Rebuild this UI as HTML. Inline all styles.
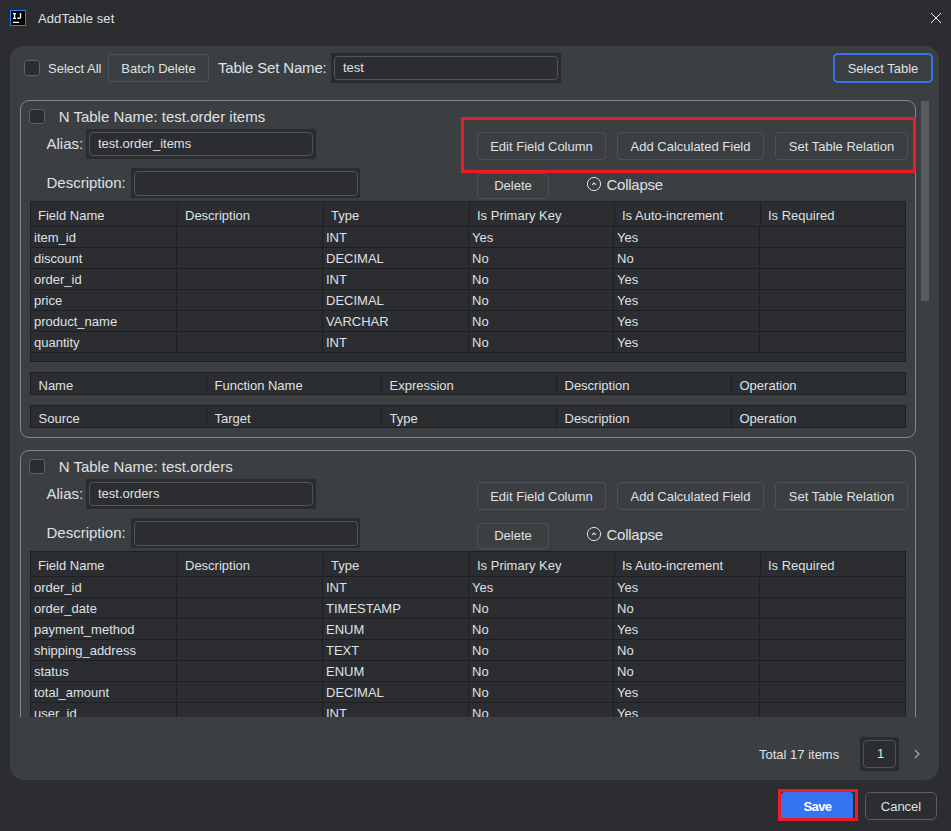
<!DOCTYPE html>
<html><head><meta charset="utf-8"><style>
html,body{margin:0;padding:0;}
body{width:951px;height:831px;overflow:hidden;background:#2B2D30;position:relative;font-family:"Liberation Sans",sans-serif;color:#DFE1E5;}
.a{position:absolute;}
.t{position:absolute;white-space:nowrap;line-height:normal;}
</style></head><body>
<svg class="a" style="left:10px;top:10px" width="16" height="16" viewBox="0 0 16 16">
<rect x="0.5" y="0.5" width="15" height="15" fill="#000" stroke="#2186F2" stroke-width="1"/>
<path d="M3 3.1 H6 V4.3 H5.2 V7.7 H6 V8.9 H3 V7.7 H3.9 V4.3 H3 Z" fill="#fff"/>
<path d="M9.8 3 H11.2 V7.3 Q11.2 9.1 9.4 9.1 H8.8 Q7.2 9.1 7.2 7.5 V7.3 H8.5 V7.4 Q8.5 7.8 8.9 7.8 H9.3 Q9.8 7.8 9.8 7.3 Z" fill="#fff"/>
<rect x="3" y="11.8" width="6" height="1.2" fill="#fff"/>
</svg>
<div class="t" style="left:38px;top:11px;font-size:13px;color:#DFE1E5;font-weight:normal;letter-spacing:0.1px">AddTable set</div>
<svg class="a" style="left:931px;top:13px" width="10" height="10" viewBox="0 0 10 10" shape-rendering="crispEdges" fill="#F0F0F0"><rect x="0" y="0" width="1" height="1"/><rect x="9" y="0" width="1" height="1"/><rect x="1" y="1" width="1" height="1"/><rect x="8" y="1" width="1" height="1"/><rect x="2" y="2" width="1" height="1"/><rect x="7" y="2" width="1" height="1"/><rect x="3" y="3" width="1" height="1"/><rect x="6" y="3" width="1" height="1"/><rect x="4" y="4" width="1" height="1"/><rect x="5" y="4" width="1" height="1"/><rect x="5" y="5" width="1" height="1"/><rect x="4" y="5" width="1" height="1"/><rect x="6" y="6" width="1" height="1"/><rect x="3" y="6" width="1" height="1"/><rect x="7" y="7" width="1" height="1"/><rect x="2" y="7" width="1" height="1"/><rect x="8" y="8" width="1" height="1"/><rect x="1" y="8" width="1" height="1"/><rect x="9" y="9" width="1" height="1"/><rect x="0" y="9" width="1" height="1"/></svg>
<div class="a" style="left:10px;top:46px;width:929px;height:734px;background:#3C3F41;border-radius:14px;"></div>
<div class="a" style="left:24px;top:60px;width:16px;height:16px;box-sizing:border-box;border:1px solid #5E6166;border-radius:3px;background:#2B2D30;"></div>
<div class="t" style="left:48px;top:61px;font-size:13px;color:#DFE1E5;font-weight:normal;">Select All</div>
<div class="a" style="left:108px;top:54px;width:101px;height:28px;box-sizing:border-box;border:1px solid #4E5157;border-radius:4px;background:transparent;"></div>
<div class="t" style="left:108px;width:101px;text-align:center;top:61px;font-size:13px;color:#DFE1E5;font-weight:normal">Batch Delete</div>
<div class="t" style="left:218px;top:59px;font-size:15px;color:#DFE1E5;font-weight:normal;letter-spacing:-0.15px">Table Set Name:</div>
<div class="a" style="left:331px;top:53px;width:230px;height:30px;background:#2A2C2F;"></div>
<div class="a" style="left:334px;top:56px;width:224px;height:24px;box-sizing:border-box;border:1px solid #50535A;border-radius:4px;background:#2B2D30;"></div>
<div class="t" style="left:343px;top:60px;font-size:13px;color:#DFE1E5;font-weight:normal;">test</div>
<div class="a" style="left:833px;top:53px;width:100px;height:30px;box-sizing:border-box;border:2px solid #3574F0;border-radius:5px;background:transparent;"></div>
<div class="t" style="left:833px;width:100px;text-align:center;top:61px;font-size:13px;color:#DFE1E5;font-weight:normal">Select Table</div>
<div class="a" style="left:0;top:95px;width:951px;height:622px;overflow:hidden">
<div class="a" style="left:20px;top:5px;width:896px;height:338px;box-sizing:border-box;border:1px solid #85878A;border-radius:9px"></div>
<div class="a" style="left:29px;top:14px;width:16px;height:15px;box-sizing:border-box;border:1px solid #5E6166;border-radius:3px;background:#2B2D30;"></div>
<div class="t" style="left:58.7px;top:13px;font-size:15px;color:#DFE1E5;font-weight:normal;">N Table Name: test.order items</div>
<div class="t" style="left:46.5px;top:40px;font-size:15px;color:#DFE1E5;font-weight:normal;">Alias:</div>
<div class="a" style="left:86px;top:34px;width:230px;height:30px;background:#2A2C2F;"></div>
<div class="a" style="left:89px;top:37px;width:224px;height:24px;box-sizing:border-box;border:1px solid #50535A;border-radius:4px;background:#2B2D30;"></div>
<div class="t" style="left:98px;top:41px;font-size:13px;color:#DFE1E5;font-weight:normal;">test.order_items</div>
<div class="t" style="left:46.5px;top:79px;font-size:15px;color:#DFE1E5;font-weight:normal;">Description:</div>
<div class="a" style="left:131px;top:73px;width:229px;height:30px;background:#2A2C2F;"></div>
<div class="a" style="left:134px;top:76px;width:224px;height:25px;box-sizing:border-box;border:1px solid #50535A;border-radius:4px;background:#2B2D30;"></div>
<div class="a" style="left:477px;top:37px;width:129px;height:28px;box-sizing:border-box;border:1px solid #4E5157;border-radius:4px;background:transparent;"></div>
<div class="t" style="left:477px;width:129px;text-align:center;top:44px;font-size:13px;color:#DFE1E5;font-weight:normal">Edit Field Column</div>
<div class="a" style="left:617px;top:37px;width:147px;height:28px;box-sizing:border-box;border:1px solid #4E5157;border-radius:4px;background:transparent;"></div>
<div class="t" style="left:617px;width:147px;text-align:center;top:44px;font-size:13px;color:#DFE1E5;font-weight:normal">Add Calculated Field</div>
<div class="a" style="left:775px;top:37px;width:133px;height:28px;box-sizing:border-box;border:1px solid #4E5157;border-radius:4px;background:transparent;"></div>
<div class="t" style="left:775px;width:133px;text-align:center;top:44px;font-size:13px;color:#DFE1E5;font-weight:normal">Set Table Relation</div>
<div class="a" style="left:477px;top:78px;width:72px;height:26px;box-sizing:border-box;border:1px solid #4E5157;border-radius:4px;background:transparent;"></div>
<div class="t" style="left:477px;width:72px;text-align:center;top:83px;font-size:13px;color:#DFE1E5;font-weight:normal">Delete</div>
<svg class="a" style="left:586px;top:81px" width="16" height="16" viewBox="0 0 16 16"><circle cx="8" cy="8" r="6.6" fill="none" stroke="#DFE1E5" stroke-width="1"/><path d="M6.1 8.9 L8 7.1 L9.9 8.9" fill="none" stroke="#DFE1E5" stroke-width="1.1"/></svg>
<div class="t" style="left:606.5px;top:81px;font-size:15px;color:#DFE1E5;font-weight:normal;letter-spacing:-0.25px">Collapse</div>
<div class="a" style="left:30px;top:106px;width:876px;height:160px;background:#2B2D30;"></div>
<div class="a" style="left:30px;top:106px;width:876px;height:1px;background:#1E1F22"></div>
<div class="a" style="left:30px;top:131px;width:876px;height:1px;background:#1E1F22"></div>
<div class="t" style="left:38px;top:113px;font-size:13px;color:#DFE1E5;font-weight:normal;">Field Name</div>
<div class="t" style="left:185px;top:113px;font-size:13px;color:#DFE1E5;font-weight:normal;">Description</div>
<div class="a" style="left:177px;top:108px;width:1px;height:22px;background:#1E1F22"></div>
<div class="t" style="left:331px;top:113px;font-size:13px;color:#DFE1E5;font-weight:normal;">Type</div>
<div class="a" style="left:323px;top:108px;width:1px;height:22px;background:#1E1F22"></div>
<div class="t" style="left:477px;top:113px;font-size:13px;color:#DFE1E5;font-weight:normal;">Is Primary Key</div>
<div class="a" style="left:469px;top:108px;width:1px;height:22px;background:#1E1F22"></div>
<div class="t" style="left:622px;top:113px;font-size:13px;color:#DFE1E5;font-weight:normal;">Is Auto-increment</div>
<div class="a" style="left:614px;top:108px;width:1px;height:22px;background:#1E1F22"></div>
<div class="t" style="left:768px;top:113px;font-size:13px;color:#DFE1E5;font-weight:normal;">Is Required</div>
<div class="a" style="left:760px;top:108px;width:1px;height:22px;background:#1E1F22"></div>
<div class="a" style="left:30px;top:152px;width:876px;height:1px;background:#1E1F22"></div>
<div class="a" style="left:176px;top:132px;width:1px;height:21px;background:#1E1F22"></div>
<div class="a" style="left:322px;top:132px;width:1px;height:21px;background:#1E1F22"></div>
<div class="a" style="left:468px;top:132px;width:1px;height:21px;background:#1E1F22"></div>
<div class="a" style="left:613px;top:132px;width:1px;height:21px;background:#1E1F22"></div>
<div class="a" style="left:759px;top:132px;width:1px;height:21px;background:#1E1F22"></div>
<div class="t" style="left:34px;top:135px;font-size:13px;color:#DFE1E5;font-weight:normal;">item_id</div>
<div class="t" style="left:326px;top:135px;font-size:13px;color:#DFE1E5;font-weight:normal;">INT</div>
<div class="t" style="left:472px;top:135px;font-size:13px;color:#DFE1E5;font-weight:normal;">Yes</div>
<div class="t" style="left:617px;top:135px;font-size:13px;color:#DFE1E5;font-weight:normal;">Yes</div>
<div class="a" style="left:30px;top:173px;width:876px;height:1px;background:#1E1F22"></div>
<div class="a" style="left:176px;top:153px;width:1px;height:21px;background:#1E1F22"></div>
<div class="a" style="left:322px;top:153px;width:1px;height:21px;background:#1E1F22"></div>
<div class="a" style="left:468px;top:153px;width:1px;height:21px;background:#1E1F22"></div>
<div class="a" style="left:613px;top:153px;width:1px;height:21px;background:#1E1F22"></div>
<div class="a" style="left:759px;top:153px;width:1px;height:21px;background:#1E1F22"></div>
<div class="t" style="left:34px;top:156px;font-size:13px;color:#DFE1E5;font-weight:normal;">discount</div>
<div class="t" style="left:326px;top:156px;font-size:13px;color:#DFE1E5;font-weight:normal;">DECIMAL</div>
<div class="t" style="left:472px;top:156px;font-size:13px;color:#DFE1E5;font-weight:normal;">No</div>
<div class="t" style="left:617px;top:156px;font-size:13px;color:#DFE1E5;font-weight:normal;">No</div>
<div class="a" style="left:30px;top:194px;width:876px;height:1px;background:#1E1F22"></div>
<div class="a" style="left:176px;top:174px;width:1px;height:21px;background:#1E1F22"></div>
<div class="a" style="left:322px;top:174px;width:1px;height:21px;background:#1E1F22"></div>
<div class="a" style="left:468px;top:174px;width:1px;height:21px;background:#1E1F22"></div>
<div class="a" style="left:613px;top:174px;width:1px;height:21px;background:#1E1F22"></div>
<div class="a" style="left:759px;top:174px;width:1px;height:21px;background:#1E1F22"></div>
<div class="t" style="left:34px;top:177px;font-size:13px;color:#DFE1E5;font-weight:normal;">order_id</div>
<div class="t" style="left:326px;top:177px;font-size:13px;color:#DFE1E5;font-weight:normal;">INT</div>
<div class="t" style="left:472px;top:177px;font-size:13px;color:#DFE1E5;font-weight:normal;">No</div>
<div class="t" style="left:617px;top:177px;font-size:13px;color:#DFE1E5;font-weight:normal;">Yes</div>
<div class="a" style="left:30px;top:215px;width:876px;height:1px;background:#1E1F22"></div>
<div class="a" style="left:176px;top:195px;width:1px;height:21px;background:#1E1F22"></div>
<div class="a" style="left:322px;top:195px;width:1px;height:21px;background:#1E1F22"></div>
<div class="a" style="left:468px;top:195px;width:1px;height:21px;background:#1E1F22"></div>
<div class="a" style="left:613px;top:195px;width:1px;height:21px;background:#1E1F22"></div>
<div class="a" style="left:759px;top:195px;width:1px;height:21px;background:#1E1F22"></div>
<div class="t" style="left:34px;top:198px;font-size:13px;color:#DFE1E5;font-weight:normal;">price</div>
<div class="t" style="left:326px;top:198px;font-size:13px;color:#DFE1E5;font-weight:normal;">DECIMAL</div>
<div class="t" style="left:472px;top:198px;font-size:13px;color:#DFE1E5;font-weight:normal;">No</div>
<div class="t" style="left:617px;top:198px;font-size:13px;color:#DFE1E5;font-weight:normal;">Yes</div>
<div class="a" style="left:30px;top:236px;width:876px;height:1px;background:#1E1F22"></div>
<div class="a" style="left:176px;top:216px;width:1px;height:21px;background:#1E1F22"></div>
<div class="a" style="left:322px;top:216px;width:1px;height:21px;background:#1E1F22"></div>
<div class="a" style="left:468px;top:216px;width:1px;height:21px;background:#1E1F22"></div>
<div class="a" style="left:613px;top:216px;width:1px;height:21px;background:#1E1F22"></div>
<div class="a" style="left:759px;top:216px;width:1px;height:21px;background:#1E1F22"></div>
<div class="t" style="left:34px;top:219px;font-size:13px;color:#DFE1E5;font-weight:normal;">product_name</div>
<div class="t" style="left:326px;top:219px;font-size:13px;color:#DFE1E5;font-weight:normal;">VARCHAR</div>
<div class="t" style="left:472px;top:219px;font-size:13px;color:#DFE1E5;font-weight:normal;">No</div>
<div class="t" style="left:617px;top:219px;font-size:13px;color:#DFE1E5;font-weight:normal;">Yes</div>
<div class="a" style="left:30px;top:257px;width:876px;height:1px;background:#1E1F22"></div>
<div class="a" style="left:176px;top:237px;width:1px;height:21px;background:#1E1F22"></div>
<div class="a" style="left:322px;top:237px;width:1px;height:21px;background:#1E1F22"></div>
<div class="a" style="left:468px;top:237px;width:1px;height:21px;background:#1E1F22"></div>
<div class="a" style="left:613px;top:237px;width:1px;height:21px;background:#1E1F22"></div>
<div class="a" style="left:759px;top:237px;width:1px;height:21px;background:#1E1F22"></div>
<div class="t" style="left:34px;top:240px;font-size:13px;color:#DFE1E5;font-weight:normal;">quantity</div>
<div class="t" style="left:326px;top:240px;font-size:13px;color:#DFE1E5;font-weight:normal;">INT</div>
<div class="t" style="left:472px;top:240px;font-size:13px;color:#DFE1E5;font-weight:normal;">No</div>
<div class="t" style="left:617px;top:240px;font-size:13px;color:#DFE1E5;font-weight:normal;">Yes</div>
<div class="a" style="left:30px;top:106px;width:1px;height:160px;background:#1E1F22"></div>
<div class="a" style="left:905px;top:106px;width:1px;height:160px;background:#1E1F22"></div>
<div class="a" style="left:30px;top:266px;width:876px;height:1px;background:#1E1F22"></div>
<div class="a" style="left:30px;top:277px;width:876px;height:23px;background:#2B2D30;box-sizing:border-box;border:1px solid #1E1F22"></div>
<div class="t" style="left:38.5px;top:283px;font-size:13px;color:#DFE1E5;font-weight:normal;">Name</div>
<div class="t" style="left:214.5px;top:283px;font-size:13px;color:#DFE1E5;font-weight:normal;">Function Name</div>
<div class="a" style="left:206px;top:280px;width:1px;height:20px;background:#1E1F22"></div>
<div class="t" style="left:389.5px;top:283px;font-size:13px;color:#DFE1E5;font-weight:normal;">Expression</div>
<div class="a" style="left:381px;top:280px;width:1px;height:20px;background:#1E1F22"></div>
<div class="t" style="left:564.5px;top:283px;font-size:13px;color:#DFE1E5;font-weight:normal;">Description</div>
<div class="a" style="left:556px;top:280px;width:1px;height:20px;background:#1E1F22"></div>
<div class="t" style="left:739.5px;top:283px;font-size:13px;color:#DFE1E5;font-weight:normal;">Operation</div>
<div class="a" style="left:731px;top:280px;width:1px;height:20px;background:#1E1F22"></div>
<div class="a" style="left:30px;top:310px;width:876px;height:23px;background:#2B2D30;box-sizing:border-box;border:1px solid #1E1F22"></div>
<div class="t" style="left:38.5px;top:316px;font-size:13px;color:#DFE1E5;font-weight:normal;">Source</div>
<div class="t" style="left:214.5px;top:316px;font-size:13px;color:#DFE1E5;font-weight:normal;">Target</div>
<div class="a" style="left:206px;top:313px;width:1px;height:20px;background:#1E1F22"></div>
<div class="t" style="left:389.5px;top:316px;font-size:13px;color:#DFE1E5;font-weight:normal;">Type</div>
<div class="a" style="left:381px;top:313px;width:1px;height:20px;background:#1E1F22"></div>
<div class="t" style="left:564.5px;top:316px;font-size:13px;color:#DFE1E5;font-weight:normal;">Description</div>
<div class="a" style="left:556px;top:313px;width:1px;height:20px;background:#1E1F22"></div>
<div class="t" style="left:739.5px;top:316px;font-size:13px;color:#DFE1E5;font-weight:normal;">Operation</div>
<div class="a" style="left:731px;top:313px;width:1px;height:20px;background:#1E1F22"></div>
<div class="a" style="left:461px;top:22px;width:455px;height:56px;box-sizing:border-box;border:3px solid #EC1C24"></div>
<div class="a" style="left:20px;top:355px;width:896px;height:338px;box-sizing:border-box;border:1px solid #85878A;border-radius:9px"></div>
<div class="a" style="left:29px;top:364px;width:16px;height:15px;box-sizing:border-box;border:1px solid #5E6166;border-radius:3px;background:#2B2D30;"></div>
<div class="t" style="left:58.7px;top:363px;font-size:15px;color:#DFE1E5;font-weight:normal;">N Table Name: test.orders</div>
<div class="t" style="left:46.5px;top:390px;font-size:15px;color:#DFE1E5;font-weight:normal;">Alias:</div>
<div class="a" style="left:86px;top:384px;width:230px;height:30px;background:#2A2C2F;"></div>
<div class="a" style="left:89px;top:387px;width:224px;height:24px;box-sizing:border-box;border:1px solid #50535A;border-radius:4px;background:#2B2D30;"></div>
<div class="t" style="left:98px;top:391px;font-size:13px;color:#DFE1E5;font-weight:normal;">test.orders</div>
<div class="t" style="left:46.5px;top:429px;font-size:15px;color:#DFE1E5;font-weight:normal;">Description:</div>
<div class="a" style="left:131px;top:423px;width:229px;height:30px;background:#2A2C2F;"></div>
<div class="a" style="left:134px;top:426px;width:224px;height:25px;box-sizing:border-box;border:1px solid #50535A;border-radius:4px;background:#2B2D30;"></div>
<div class="a" style="left:477px;top:387px;width:129px;height:28px;box-sizing:border-box;border:1px solid #4E5157;border-radius:4px;background:transparent;"></div>
<div class="t" style="left:477px;width:129px;text-align:center;top:394px;font-size:13px;color:#DFE1E5;font-weight:normal">Edit Field Column</div>
<div class="a" style="left:617px;top:387px;width:147px;height:28px;box-sizing:border-box;border:1px solid #4E5157;border-radius:4px;background:transparent;"></div>
<div class="t" style="left:617px;width:147px;text-align:center;top:394px;font-size:13px;color:#DFE1E5;font-weight:normal">Add Calculated Field</div>
<div class="a" style="left:775px;top:387px;width:133px;height:28px;box-sizing:border-box;border:1px solid #4E5157;border-radius:4px;background:transparent;"></div>
<div class="t" style="left:775px;width:133px;text-align:center;top:394px;font-size:13px;color:#DFE1E5;font-weight:normal">Set Table Relation</div>
<div class="a" style="left:477px;top:428px;width:72px;height:26px;box-sizing:border-box;border:1px solid #4E5157;border-radius:4px;background:transparent;"></div>
<div class="t" style="left:477px;width:72px;text-align:center;top:433px;font-size:13px;color:#DFE1E5;font-weight:normal">Delete</div>
<svg class="a" style="left:586px;top:431px" width="16" height="16" viewBox="0 0 16 16"><circle cx="8" cy="8" r="6.6" fill="none" stroke="#DFE1E5" stroke-width="1"/><path d="M6.1 8.9 L8 7.1 L9.9 8.9" fill="none" stroke="#DFE1E5" stroke-width="1.1"/></svg>
<div class="t" style="left:606.5px;top:431px;font-size:15px;color:#DFE1E5;font-weight:normal;letter-spacing:-0.25px">Collapse</div>
<div class="a" style="left:30px;top:456px;width:876px;height:181px;background:#2B2D30;"></div>
<div class="a" style="left:30px;top:456px;width:876px;height:1px;background:#1E1F22"></div>
<div class="a" style="left:30px;top:481px;width:876px;height:1px;background:#1E1F22"></div>
<div class="t" style="left:38px;top:463px;font-size:13px;color:#DFE1E5;font-weight:normal;">Field Name</div>
<div class="t" style="left:185px;top:463px;font-size:13px;color:#DFE1E5;font-weight:normal;">Description</div>
<div class="a" style="left:177px;top:458px;width:1px;height:22px;background:#1E1F22"></div>
<div class="t" style="left:331px;top:463px;font-size:13px;color:#DFE1E5;font-weight:normal;">Type</div>
<div class="a" style="left:323px;top:458px;width:1px;height:22px;background:#1E1F22"></div>
<div class="t" style="left:477px;top:463px;font-size:13px;color:#DFE1E5;font-weight:normal;">Is Primary Key</div>
<div class="a" style="left:469px;top:458px;width:1px;height:22px;background:#1E1F22"></div>
<div class="t" style="left:622px;top:463px;font-size:13px;color:#DFE1E5;font-weight:normal;">Is Auto-increment</div>
<div class="a" style="left:614px;top:458px;width:1px;height:22px;background:#1E1F22"></div>
<div class="t" style="left:768px;top:463px;font-size:13px;color:#DFE1E5;font-weight:normal;">Is Required</div>
<div class="a" style="left:760px;top:458px;width:1px;height:22px;background:#1E1F22"></div>
<div class="a" style="left:30px;top:502px;width:876px;height:1px;background:#1E1F22"></div>
<div class="a" style="left:176px;top:482px;width:1px;height:21px;background:#1E1F22"></div>
<div class="a" style="left:322px;top:482px;width:1px;height:21px;background:#1E1F22"></div>
<div class="a" style="left:468px;top:482px;width:1px;height:21px;background:#1E1F22"></div>
<div class="a" style="left:613px;top:482px;width:1px;height:21px;background:#1E1F22"></div>
<div class="a" style="left:759px;top:482px;width:1px;height:21px;background:#1E1F22"></div>
<div class="t" style="left:34px;top:485px;font-size:13px;color:#DFE1E5;font-weight:normal;">order_id</div>
<div class="t" style="left:326px;top:485px;font-size:13px;color:#DFE1E5;font-weight:normal;">INT</div>
<div class="t" style="left:472px;top:485px;font-size:13px;color:#DFE1E5;font-weight:normal;">Yes</div>
<div class="t" style="left:617px;top:485px;font-size:13px;color:#DFE1E5;font-weight:normal;">Yes</div>
<div class="a" style="left:30px;top:523px;width:876px;height:1px;background:#1E1F22"></div>
<div class="a" style="left:176px;top:503px;width:1px;height:21px;background:#1E1F22"></div>
<div class="a" style="left:322px;top:503px;width:1px;height:21px;background:#1E1F22"></div>
<div class="a" style="left:468px;top:503px;width:1px;height:21px;background:#1E1F22"></div>
<div class="a" style="left:613px;top:503px;width:1px;height:21px;background:#1E1F22"></div>
<div class="a" style="left:759px;top:503px;width:1px;height:21px;background:#1E1F22"></div>
<div class="t" style="left:34px;top:506px;font-size:13px;color:#DFE1E5;font-weight:normal;">order_date</div>
<div class="t" style="left:326px;top:506px;font-size:13px;color:#DFE1E5;font-weight:normal;">TIMESTAMP</div>
<div class="t" style="left:472px;top:506px;font-size:13px;color:#DFE1E5;font-weight:normal;">No</div>
<div class="t" style="left:617px;top:506px;font-size:13px;color:#DFE1E5;font-weight:normal;">No</div>
<div class="a" style="left:30px;top:544px;width:876px;height:1px;background:#1E1F22"></div>
<div class="a" style="left:176px;top:524px;width:1px;height:21px;background:#1E1F22"></div>
<div class="a" style="left:322px;top:524px;width:1px;height:21px;background:#1E1F22"></div>
<div class="a" style="left:468px;top:524px;width:1px;height:21px;background:#1E1F22"></div>
<div class="a" style="left:613px;top:524px;width:1px;height:21px;background:#1E1F22"></div>
<div class="a" style="left:759px;top:524px;width:1px;height:21px;background:#1E1F22"></div>
<div class="t" style="left:34px;top:527px;font-size:13px;color:#DFE1E5;font-weight:normal;">payment_method</div>
<div class="t" style="left:326px;top:527px;font-size:13px;color:#DFE1E5;font-weight:normal;">ENUM</div>
<div class="t" style="left:472px;top:527px;font-size:13px;color:#DFE1E5;font-weight:normal;">No</div>
<div class="t" style="left:617px;top:527px;font-size:13px;color:#DFE1E5;font-weight:normal;">Yes</div>
<div class="a" style="left:30px;top:565px;width:876px;height:1px;background:#1E1F22"></div>
<div class="a" style="left:176px;top:545px;width:1px;height:21px;background:#1E1F22"></div>
<div class="a" style="left:322px;top:545px;width:1px;height:21px;background:#1E1F22"></div>
<div class="a" style="left:468px;top:545px;width:1px;height:21px;background:#1E1F22"></div>
<div class="a" style="left:613px;top:545px;width:1px;height:21px;background:#1E1F22"></div>
<div class="a" style="left:759px;top:545px;width:1px;height:21px;background:#1E1F22"></div>
<div class="t" style="left:34px;top:548px;font-size:13px;color:#DFE1E5;font-weight:normal;">shipping_address</div>
<div class="t" style="left:326px;top:548px;font-size:13px;color:#DFE1E5;font-weight:normal;">TEXT</div>
<div class="t" style="left:472px;top:548px;font-size:13px;color:#DFE1E5;font-weight:normal;">No</div>
<div class="t" style="left:617px;top:548px;font-size:13px;color:#DFE1E5;font-weight:normal;">No</div>
<div class="a" style="left:30px;top:586px;width:876px;height:1px;background:#1E1F22"></div>
<div class="a" style="left:176px;top:566px;width:1px;height:21px;background:#1E1F22"></div>
<div class="a" style="left:322px;top:566px;width:1px;height:21px;background:#1E1F22"></div>
<div class="a" style="left:468px;top:566px;width:1px;height:21px;background:#1E1F22"></div>
<div class="a" style="left:613px;top:566px;width:1px;height:21px;background:#1E1F22"></div>
<div class="a" style="left:759px;top:566px;width:1px;height:21px;background:#1E1F22"></div>
<div class="t" style="left:34px;top:569px;font-size:13px;color:#DFE1E5;font-weight:normal;">status</div>
<div class="t" style="left:326px;top:569px;font-size:13px;color:#DFE1E5;font-weight:normal;">ENUM</div>
<div class="t" style="left:472px;top:569px;font-size:13px;color:#DFE1E5;font-weight:normal;">No</div>
<div class="t" style="left:617px;top:569px;font-size:13px;color:#DFE1E5;font-weight:normal;">No</div>
<div class="a" style="left:30px;top:607px;width:876px;height:1px;background:#1E1F22"></div>
<div class="a" style="left:176px;top:587px;width:1px;height:21px;background:#1E1F22"></div>
<div class="a" style="left:322px;top:587px;width:1px;height:21px;background:#1E1F22"></div>
<div class="a" style="left:468px;top:587px;width:1px;height:21px;background:#1E1F22"></div>
<div class="a" style="left:613px;top:587px;width:1px;height:21px;background:#1E1F22"></div>
<div class="a" style="left:759px;top:587px;width:1px;height:21px;background:#1E1F22"></div>
<div class="t" style="left:34px;top:590px;font-size:13px;color:#DFE1E5;font-weight:normal;">total_amount</div>
<div class="t" style="left:326px;top:590px;font-size:13px;color:#DFE1E5;font-weight:normal;">DECIMAL</div>
<div class="t" style="left:472px;top:590px;font-size:13px;color:#DFE1E5;font-weight:normal;">No</div>
<div class="t" style="left:617px;top:590px;font-size:13px;color:#DFE1E5;font-weight:normal;">Yes</div>
<div class="a" style="left:30px;top:628px;width:876px;height:1px;background:#1E1F22"></div>
<div class="a" style="left:176px;top:608px;width:1px;height:21px;background:#1E1F22"></div>
<div class="a" style="left:322px;top:608px;width:1px;height:21px;background:#1E1F22"></div>
<div class="a" style="left:468px;top:608px;width:1px;height:21px;background:#1E1F22"></div>
<div class="a" style="left:613px;top:608px;width:1px;height:21px;background:#1E1F22"></div>
<div class="a" style="left:759px;top:608px;width:1px;height:21px;background:#1E1F22"></div>
<div class="t" style="left:34px;top:611px;font-size:13px;color:#DFE1E5;font-weight:normal;">user_id</div>
<div class="t" style="left:326px;top:611px;font-size:13px;color:#DFE1E5;font-weight:normal;">INT</div>
<div class="t" style="left:472px;top:611px;font-size:13px;color:#DFE1E5;font-weight:normal;">No</div>
<div class="t" style="left:617px;top:611px;font-size:13px;color:#DFE1E5;font-weight:normal;">Yes</div>
<div class="a" style="left:30px;top:456px;width:1px;height:181px;background:#1E1F22"></div>
<div class="a" style="left:905px;top:456px;width:1px;height:181px;background:#1E1F22"></div>
<div class="a" style="left:30px;top:637px;width:876px;height:1px;background:#1E1F22"></div>
<div class="a" style="left:30px;top:627px;width:876px;height:23px;background:#2B2D30;box-sizing:border-box;border:1px solid #1E1F22"></div>
<div class="t" style="left:38.5px;top:633px;font-size:13px;color:#DFE1E5;font-weight:normal;">Name</div>
<div class="t" style="left:214.5px;top:633px;font-size:13px;color:#DFE1E5;font-weight:normal;">Function Name</div>
<div class="a" style="left:206px;top:630px;width:1px;height:20px;background:#1E1F22"></div>
<div class="t" style="left:389.5px;top:633px;font-size:13px;color:#DFE1E5;font-weight:normal;">Expression</div>
<div class="a" style="left:381px;top:630px;width:1px;height:20px;background:#1E1F22"></div>
<div class="t" style="left:564.5px;top:633px;font-size:13px;color:#DFE1E5;font-weight:normal;">Description</div>
<div class="a" style="left:556px;top:630px;width:1px;height:20px;background:#1E1F22"></div>
<div class="t" style="left:739.5px;top:633px;font-size:13px;color:#DFE1E5;font-weight:normal;">Operation</div>
<div class="a" style="left:731px;top:630px;width:1px;height:20px;background:#1E1F22"></div>
<div class="a" style="left:30px;top:660px;width:876px;height:23px;background:#2B2D30;box-sizing:border-box;border:1px solid #1E1F22"></div>
<div class="t" style="left:38.5px;top:666px;font-size:13px;color:#DFE1E5;font-weight:normal;">Source</div>
<div class="t" style="left:214.5px;top:666px;font-size:13px;color:#DFE1E5;font-weight:normal;">Target</div>
<div class="a" style="left:206px;top:663px;width:1px;height:20px;background:#1E1F22"></div>
<div class="t" style="left:389.5px;top:666px;font-size:13px;color:#DFE1E5;font-weight:normal;">Type</div>
<div class="a" style="left:381px;top:663px;width:1px;height:20px;background:#1E1F22"></div>
<div class="t" style="left:564.5px;top:666px;font-size:13px;color:#DFE1E5;font-weight:normal;">Description</div>
<div class="a" style="left:556px;top:663px;width:1px;height:20px;background:#1E1F22"></div>
<div class="t" style="left:739.5px;top:666px;font-size:13px;color:#DFE1E5;font-weight:normal;">Operation</div>
<div class="a" style="left:731px;top:663px;width:1px;height:20px;background:#1E1F22"></div>
<div class="a" style="left:921px;top:6px;width:8px;height:200px;background:#5A5C5F;"></div>
</div>
<div class="t" style="left:759px;top:747px;font-size:13px;color:#DFE1E5;font-weight:normal;">Total 17 items</div>
<div class="a" style="left:860px;top:737px;width:39px;height:34px;background:#2A2C2F;"></div>
<div class="a" style="left:863px;top:740px;width:33px;height:28px;box-sizing:border-box;border:1px solid #50535A;border-radius:4px;background:#2B2D30;"></div>
<div class="t" style="left:877px;top:746px;font-size:13px;color:#DFE1E5;font-weight:normal;">1</div>
<svg class="a" style="left:912px;top:748px" width="10" height="12" viewBox="0 0 10 12"><path d="M3 2 L7 6 L3 10" fill="none" stroke="#A9ABAF" stroke-width="1.2"/></svg>
<div class="a" style="left:778px;top:789px;width:80px;height:32px;box-sizing:border-box;border:3px solid #EC1C24;"></div>
<div class="a" style="left:781px;top:792px;width:72px;height:26px;background:#3574F0;border-radius:4px 4px 0 0;"></div>
<div class="t" style="left:803.5px;top:799px;font-size:13px;color:#FFFFFF;font-weight:bold;letter-spacing:-0.6px">Save</div>
<div class="a" style="left:865px;top:792px;width:72px;height:28px;box-sizing:border-box;border:1px solid #5A5D63;border-radius:5px;background:transparent;"></div>
<div class="t" style="left:865px;width:72px;text-align:center;top:799px;font-size:13px;color:#DFE1E5;font-weight:normal">Cancel</div>
</body></html>
